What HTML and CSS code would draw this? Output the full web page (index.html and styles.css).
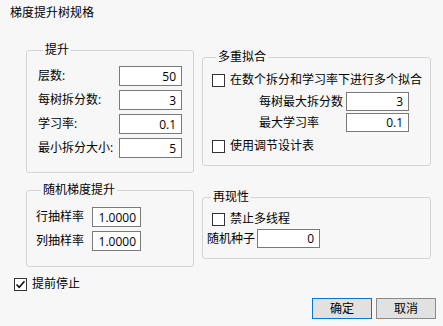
FILE: index.html
```html
<!DOCTYPE html>
<html lang="zh-CN">
<head>
  <meta charset="UTF-8" />
  <title>梯度提升树规格</title>
  <link rel="stylesheet" href="styles.css">
</head>
<body>

  <div class="title">梯度提升树规格</div>

  <div class="main">
    <div class="col col-left">
      <fieldset class="group group-boost">
        <legend>提升</legend>
        <div class="row"><label>层数:</label><input class="num" type="text" value="50" /></div>
        <div class="row"><label>每树拆分数:</label><input class="num" type="text" value="3" /></div>
        <div class="row"><label>学习率:</label><input class="num" type="text" value="0.1" /></div>
        <div class="row"><label>最小拆分大小:</label><input class="num" type="text" value="5" /></div>
      </fieldset>

      <fieldset class="group group-sgb">
        <legend>随机梯度提升</legend>
        <div class="row"><label>行抽样率</label><input class="num short" type="text" value="1.0000" /></div>
        <div class="row"><label>列抽样率</label><input class="num short" type="text" value="1.0000" /></div>
      </fieldset>
    </div>

    <div class="col col-right">
      <fieldset class="group group-multi">
        <legend>多重拟合</legend>
        <div class="check-row"><span class="box"></span>在数个拆分和学习率下进行多个拟合</div>
        <div class="sub-row"><label>每树最大拆分数</label><input class="num" type="text" value="3" /></div>
        <div class="sub-row"><label>最大学习率</label><input class="num" type="text" value="0.1" /></div>
        <div class="check-row last"><span class="box"></span>使用调节设计表</div>
      </fieldset>

      <fieldset class="group group-repro">
        <legend>再现性</legend>
        <div class="check-row"><span class="box"></span>禁止多线程</div>
        <div class="seed-row"><label>随机种子</label><input class="num" type="text" value="0" /></div>
      </fieldset>
    </div>
  </div>

  <div class="check-row early">
    <span class="box">
      <svg width="11" height="11" viewBox="0 0 11 11"><path d="M1.5 5.5 L4.2 8.3 L9.5 2.2" fill="none" stroke="#111" stroke-width="1.6"/></svg>
    </span>提前停止
  </div>

  <div class="buttons">
    <button class="default">确定</button>
    <button>取消</button>
  </div>

</body>
</html>
```

FILE: styles.css
```css
body {
  margin: 0;
  padding: 5px 0 0 0;
  background: #f7f7f7;
  font-family: "Open Sans", "Noto Sans CJK SC", sans-serif;
  font-size: 12px;
  line-height: 16px;
  color: #000;
}
.title {
  padding-left: 10px;
}
.main {
  display: flex;
  gap: 8px;
  padding: 21px 0 0 26px;
}
.col {
  display: flex;
  flex-direction: column;
}
.col-left {
  width: 168px;
}
.col-right {
  width: 229px;
  margin-top: 7px;
}
.group {
  margin: 0;
  min-width: 0;
  border: 1px solid #d4d4d4;
  border-radius: 3px;
  display: flex;
  flex-direction: column;
}
.group legend {
  padding: 0 2px;
  margin-left: 4px;
  line-height: 16px;
}
.col-left .group legend {
  margin-left: 5px;
}
input.num {
  box-sizing: border-box;
  width: 63px;
  height: 20px;
  margin: 0;
  padding: 0 5px;
  border: 1px solid #7a7a7a;
  background: #fff;
  font: inherit;
  text-align: right;
  color: #000;
}
input.short {
  width: 49px;
  padding-right: 4px;
}
.row {
  display: flex;
  align-items: center;
  height: 20px;
}
.row + .row {
  margin-top: 4px;
}

/* 提升 */
.group-boost {
  padding: 8px 11px 14px 11px;
}
.group-boost .row {
  justify-content: space-between;
}

/* 随机梯度提升 */
.group-sgb {
  margin-top: 9px;
  padding: 9px 9px 15px 9px;
}
.group-sgb .row {
  gap: 8px;
}
.group-sgb label {
  width: 48px;
}

/* 复选框 */
.check-row {
  display: flex;
  align-items: center;
  height: 16px;
  white-space: nowrap;
}
.box {
  box-sizing: border-box;
  width: 13px;
  height: 13px;
  border: 1px solid #333;
  background: #fff;
  margin-right: 5px;
  display: flex;
  align-items: center;
  justify-content: center;
}

/* 多重拟合 */
.group-multi {
  padding: 7px 4px 11px 9px;
}
.sub-row {
  display: flex;
  align-items: center;
  height: 19px;
  padding-left: 47px;
  margin-top: 4px;
}
.sub-row + .sub-row {
  margin-top: 2px;
}
.sub-row label {
  width: 87px;
}
.sub-row input.num,
.seed-row input.num {
  height: 19px;
}
.check-row.last {
  margin-top: 6px;
}

/* 再现性 */
.group-repro {
  margin-top: 23px;
  padding: 6px 4px 10px 4px;
}
.group-repro .check-row {
  margin-left: 5px;
}
.seed-row {
  display: flex;
  align-items: center;
  height: 19px;
  margin-top: 2px;
  gap: 2px;
}
.seed-row label {
  width: 48px;
}

/* 提前停止 */
.early {
  margin-top: 9px;
  padding-left: 14px;
}

.buttons {
  display: flex;
  justify-content: flex-end;
  gap: 4px;
  padding-right: 7px;
  margin-top: 6px;
}
button {
  box-sizing: border-box;
  width: 60px;
  height: 21px;
  margin: 0;
  padding: 0;
  background: #e1e1e1;
  border: 1px solid #8a8a8a;
  font: inherit;
  color: #000;
  cursor: pointer;
}
button.default {
  border-color: #0078d7;
}
```
